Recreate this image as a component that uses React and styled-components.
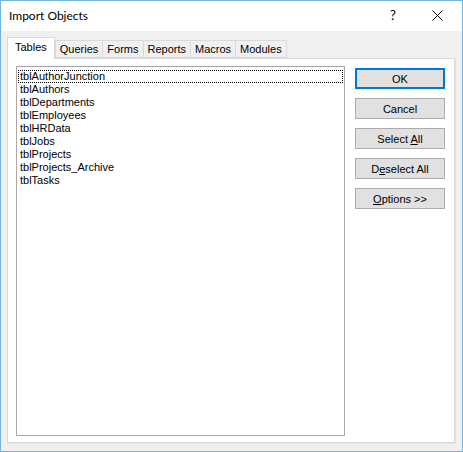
import React from "react";
import styled, { createGlobalStyle } from "styled-components";

const GlobalStyle = createGlobalStyle`
  html, body {
    margin: 0;
    padding: 0;
    background: #ffffff;
  }
`;

const tables = [
  "tblAuthorJunction",
  "tblAuthors",
  "tblDepartments",
  "tblEmployees",
  "tblHRData",
  "tblJobs",
  "tblProjects",
  "tblProjects_Archive",
  "tblTasks",
];

const tabs = ["Tables", "Queries", "Forms", "Reports", "Macros", "Modules"];

function Key({ children }) {
  return <u>{children}</u>;
}

function App() {
  return (
    <>
      <GlobalStyle />
      <Window>
        <TitleBar>
          <Title>Import Objects</Title>
          <HelpButton>?</HelpButton>
          <CloseButton>
            <svg width="11" height="11" viewBox="0 0 11 11">
              <path d="M0.5 0.5 L10.5 10.5 M10.5 0.5 L0.5 10.5" stroke="#000" strokeWidth="1" fill="none" />
            </svg>
          </CloseButton>
        </TitleBar>
        <Body>
          <TabStrip>
            {tabs.map((t, i) => (
              <Tab key={t} active={i === 0}>
                {t}
              </Tab>
            ))}
          </TabStrip>
          <Panel>
            <ListBox>
              {tables.map((name, i) => (
                <ListItem key={name} focused={i === 0}>
                  {name}
                </ListItem>
              ))}
            </ListBox>
            <ButtonColumn>
              <Button primary>
                <span>OK</span>
              </Button>
              <Button>
                <span>Cancel</span>
              </Button>
              <Button>
                <span>
                  Select <Key>A</Key>ll
                </span>
              </Button>
              <Button>
                <span>
                  D<Key>e</Key>select All
                </span>
              </Button>
              <Button>
                <span>
                  <Key>O</Key>ptions &gt;&gt;
                </span>
              </Button>
            </ButtonColumn>
          </Panel>
        </Body>
      </Window>
    </>
  );
}

const Window = styled.div`
  width: 463px;
  height: 452px;
  box-sizing: border-box;
  border: 1px solid #6fb6e0;
  display: flex;
  flex-direction: column;
  background: #f0f0f0;
  font-family: "Liberation Sans", Arial, sans-serif;
  color: #000;
`;

const TitleBar = styled.div`
  height: 30px;
  background: #ffffff;
  display: flex;
  align-items: center;
  padding-left: 8px;
`;

const Title = styled.span`
  font-family: Lato, "Noto Sans", sans-serif;
  font-size: 12px;
  flex: 1;
  margin-top: -1px;
`;

const HelpButton = styled.span`
  width: 46px;
  text-align: center;
  font-family: Lato, "Noto Sans", sans-serif;
  font-size: 13px;
  margin-top: -3px;
  margin-right: -2px;
`;

const CloseButton = styled.span`
  width: 46px;
  display: flex;
  justify-content: center;
  align-items: center;
  margin-top: -2px;
  margin-right: 2px;
`;

const Body = styled.div`
  flex: 1;
  padding: 6px 7px 8px 6px;
  display: flex;
  flex-direction: column;
`;

const TabStrip = styled.div`
  display: flex;
  align-items: flex-end;
  height: 21px;
  position: relative;
  z-index: 1;
`;

const Tab = styled.div`
  box-sizing: border-box;
  font-size: 11px;
  border: 1px solid #d9d9d9;
  border-right: ${(p) => (p.active ? "1px solid #d9d9d9" : "none")};
  background: ${(p) => (p.active ? "#ffffff" : "#f0f0f0")};
  height: ${(p) => (p.active ? "22px" : "18px")};
  margin-bottom: ${(p) => (p.active ? "-1px" : "0")};
  border-bottom: ${(p) => (p.active ? "none" : "1px solid #d9d9d9")};
  padding: ${(p) => (p.active ? "2px 7px 0 7px" : "1px 4px 0 4px")};
  line-height: 15px;
  &:last-child {
    border-right: 1px solid #d9d9d9;
  }
`;

const Panel = styled.div`
  flex: 1;
  background: #ffffff;
  border: 1px solid #d9d9d9;
  box-shadow: 1px 1px 0 #e3e3e3;
  display: flex;
  align-items: flex-start;
  padding: 7px 0 0 8px;
  gap: 10px;
`;

const ListBox = styled.div`
  box-sizing: border-box;
  width: 329px;
  height: 370px;
  border: 1px solid #a9a9a9;
  background: #fff;
  padding: 3px 1px;
  font-size: 11px;
`;

const ListItem = styled.div`
  box-sizing: border-box;
  height: 13px;
  line-height: 11px;
  padding-left: 1px;
  border: 1px dotted ${(p) => (p.focused ? "#000" : "transparent")};
`;

const ButtonColumn = styled.div`
  display: flex;
  flex-direction: column;
  gap: 9px;
  padding-top: 2px;
`;

const Button = styled.div`
  box-sizing: border-box;
  width: 90px;
  height: 21px;
  background: #e1e1e1;
  border: ${(p) => (p.primary ? "2px solid #0078d7" : "1px solid #adadad")};
  display: flex;
  align-items: center;
  justify-content: center;
  font-size: 11px;
  u {
    text-decoration: underline;
  }
`;

export default App;
